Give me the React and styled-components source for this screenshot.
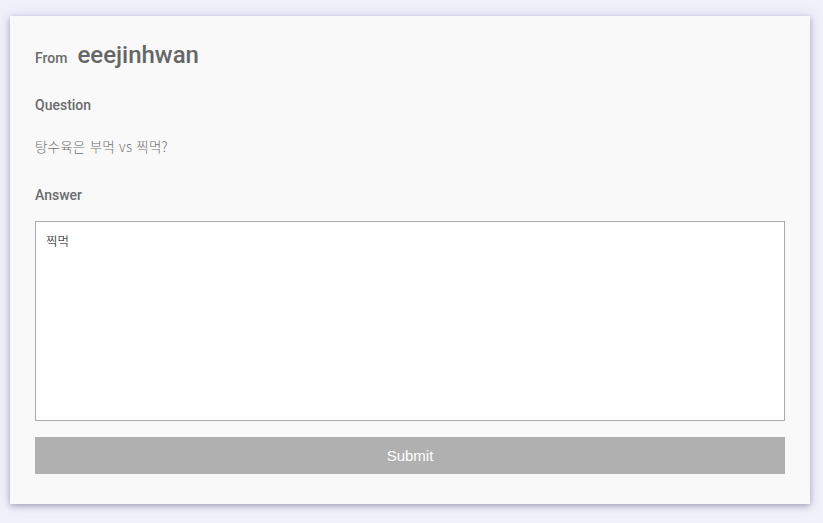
import React from "react";
import styled, { createGlobalStyle } from "styled-components";

const Global = createGlobalStyle`
  html, body { margin: 0; padding: 0; background: #f1f1fb; }
  body { font-family: Roboto, "Noto Sans CJK KR", sans-serif; }
  * { box-sizing: border-box; }
`;

const Page = styled.div`
  padding: 16px 13px 19px 10px;
`;

const Card = styled.div`
  width: 800px;
  background: #f9f9f9;
  padding: 25px 25px 30px 25px;
  box-shadow: 0 2px 6px rgba(40, 40, 60, 0.35), 0 0 14px rgba(120, 120, 200, 0.18);
  display: flex;
  flex-direction: column;
`;

const FromRow = styled.div`
  display: flex;
  align-items: baseline;
  gap: 10px;
  height: 28px;
`;

const SmallLabel = styled.span`
  font-family: Roboto, sans-serif;
  font-weight: 500;
  font-size: 14px;
  color: #6b6b6b;
`;

const UserName = styled.span`
  font-family: Roboto, sans-serif;
  font-weight: 500;
  font-size: 24px;
  line-height: 28px;
  color: #666;
`;

const SectionLabel = styled.div`
  font-family: Roboto, sans-serif;
  font-weight: 500;
  font-size: 14px;
  line-height: 16px;
  color: #6b6b6b;
  margin-top: ${(p) => p.$mt}px;
`;

const QuestionText = styled.div`
  font-family: "Noto Sans CJK KR", sans-serif;
  font-weight: 300;
  font-size: 13.5px;
  line-height: 18px;
  letter-spacing: 0.2px;
  word-spacing: 1px;
  color: #707070;
  margin-top: 24px;
`;

const AnswerBox = styled.textarea`
  display: block;
  width: 750px;
  height: 200px;
  margin-top: 18px;
  border: 1px solid #aaa;
  background: #fff;
  padding: 9px 10px;
  font-family: "Noto Sans CJK KR", sans-serif;
  font-weight: 300;
  font-size: 12.5px;
  color: #000;
  resize: none;
  outline: none;
`;

const SubmitButton = styled.button`
  margin-top: 16px;
  height: 37px;
  width: 750px;
  border: none;
  background: #b0b0b0;
  color: #fff;
  font-family: "Liberation Sans", Arial, sans-serif;
  font-size: 15px;
  cursor: pointer;
`;

export default function App() {
  return (
    <>
      <Global />
      <Page>
        <Card>
          <FromRow>
            <SmallLabel>From</SmallLabel>
            <UserName>eeejinhwan</UserName>
          </FromRow>
          <SectionLabel $mt={28}>Question</SectionLabel>
          <QuestionText>탕수육은 부먹 vs 찍먹?</QuestionText>
          <SectionLabel $mt={32}>Answer</SectionLabel>
          <AnswerBox defaultValue="찍먹" />
          <SubmitButton>Submit</SubmitButton>
        </Card>
      </Page>
    </>
  );
}
